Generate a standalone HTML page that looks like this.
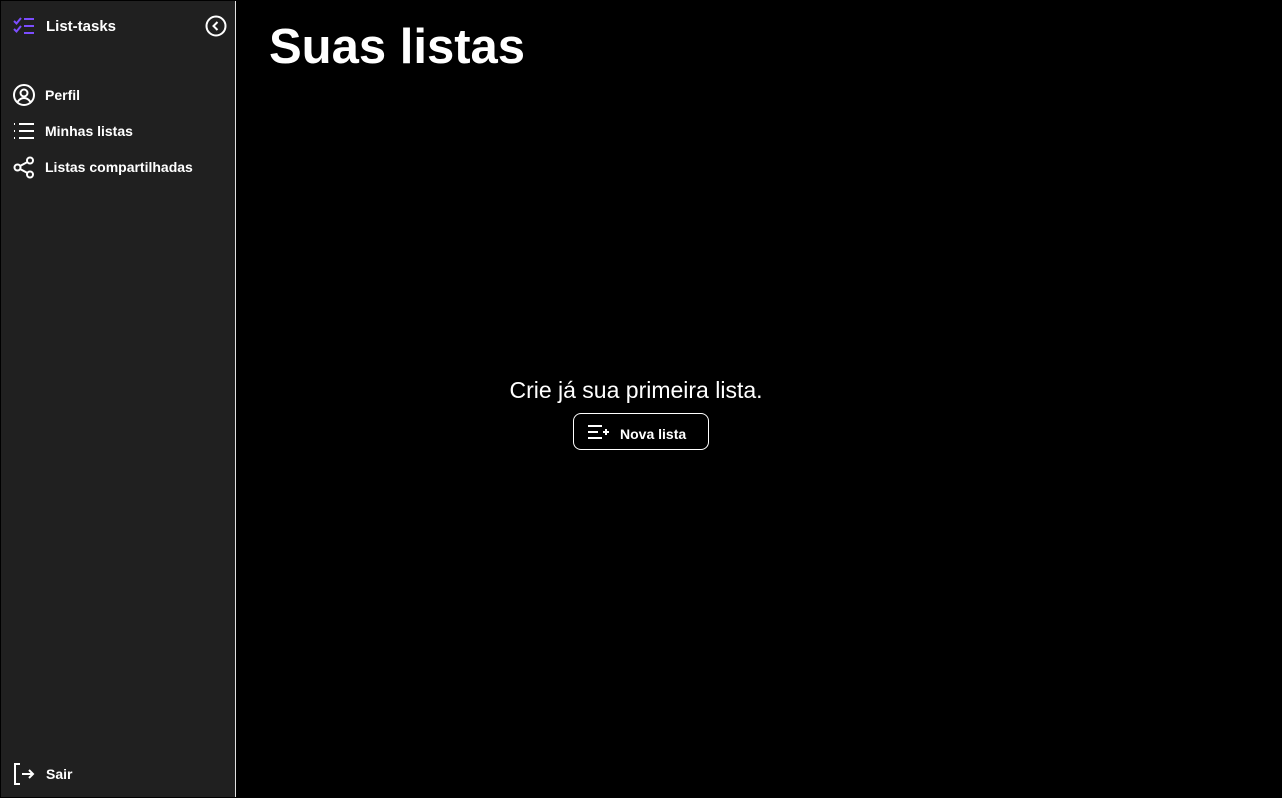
<!DOCTYPE html>
<html><head><meta charset="utf-8"><style>
*{margin:0;padding:0;box-sizing:border-box}
body{width:1282px;height:798px;background:#000;font-family:"Liberation Sans",sans-serif;color:#fff;position:relative;overflow:hidden}
.side{position:absolute;left:1px;top:1px;width:235px;height:796px;background:#202020;border-right:1px solid #e0e0e0}
.t{position:absolute;font-weight:bold;font-size:14px}
svg{position:absolute}
</style></head><body>
<div class="side"></div>
<svg style="left:13px;top:17px" width="22" height="18" viewBox="0 0 22 18" fill="none" stroke="#7c4dff" stroke-width="2"><path d="M1 4l2.5 2.5L8 1M1 12l2.5 2.5L8 9M11 2h10M11 9h10M11 16h10"/></svg>
<div class="t" style="left:46px;top:18px;font-size:15px">List-tasks</div>
<svg style="left:205px;top:15px" width="22" height="22" viewBox="0 0 22 22" fill="none" stroke="#fff" stroke-width="2"><circle cx="11" cy="11" r="9.5"/><path d="M12.5 7l-4 4 4 4"/></svg>
<svg style="left:12px;top:83px" width="24" height="24" viewBox="0 0 24 24" fill="none" stroke="#fff" stroke-width="2"><circle cx="12" cy="12" r="10"/><circle cx="12" cy="10" r="3.5"/><path d="M5.5 19c2-3 4-4 6.5-4s4.5 1 6.5 4"/></svg>
<div class="t" style="left:45px;top:87px">Perfil</div>
<svg style="left:13px;top:122px" width="22" height="18" viewBox="0 0 22 18" fill="none" stroke="#fff" stroke-width="2"><path d="M1 2h1M1 9h1M1 16h1M6 2h15M6 9h15M6 16h15"/></svg>
<div class="t" style="left:45px;top:123px">Minhas listas</div>
<svg style="left:13px;top:156px" width="22" height="23" viewBox="0 0 22 23" fill="none" stroke="#fff" stroke-width="2"><circle cx="17" cy="4.5" r="3"/><circle cx="4.5" cy="11.5" r="3"/><circle cx="17" cy="18.5" r="3"/><path d="M7 10l7.5-4M7 13l7.5 4"/></svg>
<div class="t" style="left:45px;top:159px">Listas compartilhadas</div>
<svg style="left:13px;top:763px" width="22" height="22" viewBox="0 0 22 22" fill="none" stroke="#fff" stroke-width="2"><path d="M7 1H2v20h5M9 11h11M16 7l4 4-4 4"/></svg>
<div class="t" style="left:46px;top:766px">Sair</div>
<div style="position:absolute;left:269px;top:19px;font-size:49px;font-weight:bold">Suas listas</div>
<div style="position:absolute;left:236px;width:800px;text-align:center;top:377px;font-size:23px;font-weight:300">Crie já sua primeira lista.</div>
<div style="position:absolute;left:573px;top:413px;width:136px;height:37px;border:1px solid #fff;border-radius:8px"></div>
<svg style="left:587px;top:424px" width="22" height="16" viewBox="0 0 22 16" fill="none" stroke="#fff" stroke-width="2"><path d="M1 2h14M1 8h10M1 14h14M16 8h6M19 5v6"/></svg>
<div class="t" style="left:620px;top:426px">Nova lista</div>
</body></html>
